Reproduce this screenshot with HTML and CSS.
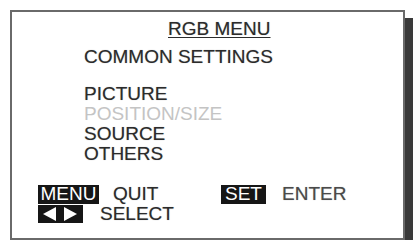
FILE: index.html
```html
<!DOCTYPE html>
<html lang="en">
<head>
  <meta charset="UTF-8" />
  <title>RGB Menu</title>
  <link rel="stylesheet" href="styles.css">
</head>
<body>
  <div class="screen">
    <h2 class="title">RGB MENU</h2>

    <div class="group">COMMON SETTINGS</div>

    <!-- Menu items -->
    <ul class="items">
      <li>PICTURE</li>
      <li class="disabled">POSITION/SIZE</li>
      <li>SOURCE</li>
      <li>OTHERS</li>
    </ul>

    <!-- Key guide -->
    <div class="guide">
      <div class="row">
        <span class="key key-menu">MENU</span>
        <span class="label label-quit">QUIT</span>
        <span class="key key-set">SET</span>
        <span class="label label-enter">ENTER</span>
      </div>
      <div class="row">
        <span class="key key-arrows">
          <svg width="45" height="18" viewBox="0 0 45 18">
            <polygon points="5,9 18,2 18,16" fill="#fff" />
            <polygon points="26,2 26,16 39,9" fill="#fff" />
          </svg>
        </span>
        <span class="label label-select">SELECT</span>
      </div>
    </div>
  </div>
</body>
</html>
```

FILE: styles.css
```css
body {
  margin: 0;
  background: #fff;
  font-family: "Liberation Sans", Arial, sans-serif;
  color: #2b2b2b;
}

.screen {
  margin: 10px 0 0 10px;
  width: 391px;
  height: 219px;
  border: 2px solid #6a6a6a;
  box-shadow: 8px 8px 0 #3a3a3a;
  padding-top: 7px;
  box-sizing: content-box;
  font-size: 19px;
  line-height: 20px;
  text-shadow: 0 0 1px rgba(0, 0, 0, 0.35);
}

.screen * {
  box-sizing: border-box;
}

.title {
  margin: 0 0 0 156px;
  font-size: 19px;
  font-weight: normal;
  text-decoration: underline;
  text-underline-offset: 2px;
  text-decoration-thickness: 1px;
}

.group {
  margin: 8px 0 0 72px;
}

.items {
  list-style: none;
  margin: 17px 0 0 72px;
  padding: 0;
}

.items .disabled {
  color: #c4c4c4;
  text-shadow: none;
}

.guide {
  margin: 20px 0 0 26px;
}

.row {
  display: flex;
  align-items: center;
  height: 20px;
}

.key {
  display: flex;
  align-items: center;
  justify-content: center;
  background: #161616;
  color: #fff;
  height: 19px;
  text-shadow: none;
}

.key-menu {
  width: 61px;
  margin-right: 14px;
}

.label-quit {
  width: 108px;
}

.key-set {
  width: 45px;
  margin-right: 16px;
}

.label-enter {
  color: #4a4a4a;
}

.key-arrows {
  width: 45px;
  height: 18px;
  margin-right: 17px;
}
```
